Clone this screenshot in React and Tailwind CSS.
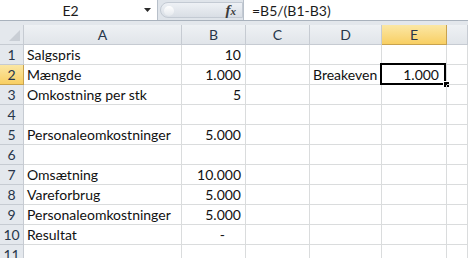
const cols = [
  { key: "A", w: "w-[158px]" },
  { key: "B", w: "w-[64px]" },
  { key: "C", w: "w-[64px]" },
  { key: "D", w: "w-[72px]" },
  { key: "E", w: "w-[65px]" },
  { key: "F", w: "flex-1" },
];

const rows = [
  { n: 1, A: "Salgspris", B: "10" },
  { n: 2, A: "Mængde", B: "1.000", D: "Breakeven", E: "1.000" },
  { n: 3, A: "Omkostning per stk", B: "5" },
  { n: 4 },
  { n: 5, A: "Personaleomkostninger", B: "5.000" },
  { n: 6 },
  { n: 7, A: "Omsætning", B: "10.000" },
  { n: 8, A: "Vareforbrug", B: "5.000" },
  { n: 9, A: "Personaleomkostninger", B: "5.000" },
  { n: 10, A: "Resultat", B: "-" },
  { n: 11 },
];

const FormulaBar = () => (
  <div className="flex h-[21px] border-b border-[#a9b2bd] bg-[#dfe4ea]">
    <div className="relative flex w-[158px] items-center justify-center border-r border-[#b8c0ca] bg-white text-[14px] text-[#1b1b1b]">
      <span className="-ml-[16px]">E2</span>
      <svg className="absolute right-[6px] top-[8px]" width="7" height="4" viewBox="0 0 7 4">
        <path d="M0 0h7L3.5 4z" fill="#2b2b2b" />
      </svg>
    </div>
    <div className="flex w-[85px] items-center py-[2px] pl-[2px]">
      <div className="relative flex h-full flex-1 items-center justify-end rounded-l-full border border-[#c3cad3] bg-gradient-to-b from-[#eef1f5] to-[#d9dee5] pr-[6px]">
        <div className="absolute left-[3px] top-[3px] h-[10px] w-[10px] rounded-full bg-gradient-to-b from-white to-[#e4e8ed]" />
        <span className="font-['Liberation_Serif'] text-[15px] font-bold italic leading-none text-[#3a3a3a]">
          f<span className="text-[11px]">x</span>
        </span>
      </div>
    </div>
    <div className="flex flex-1 items-center border-l border-[#b8c0ca] bg-white pl-[8px] text-[14px] text-[#1b1b1b]">
      =B5/(B1-B3)
    </div>
  </div>
);

const HeaderRow = () => (
  <div className="flex h-[20px]">
    <div className="relative w-[24px] border-r border-b border-[#c6cbd2] bg-[#e4e8ed]">
      <svg className="absolute right-[3px] bottom-[3px]" width="11" height="11" viewBox="0 0 11 11">
        <path d="M11 0V11H0z" fill="#c9ced5" />
      </svg>
    </div>
    {cols.map((c) =>
      c.key === "E" ? (
        <div
          key={c.key}
          className={`${c.w} flex items-center justify-center border-r border-b border-[#c8a24e] bg-gradient-to-b from-[#fbe7a4] to-[#f8cf62] text-[14px] text-[#28364a]`}
        >
          {c.key}
        </div>
      ) : (
        <div
          key={c.key}
          className={`${c.w} flex items-center justify-center border-r border-b border-[#c6cbd2] bg-gradient-to-b from-[#eef1f4] to-[#e1e5ea] text-[14px] text-[#28364a]`}
        >
          {c.key === "F" ? "" : c.key}
        </div>
      )
    )}
  </div>
);

const Cell = ({ col, row }) => {
  const v = row[col.key];
  const right = col.key === "B" || col.key === "E";
  const selected = row.n === 2 && col.key === "E";
  let pad = "justify-start pl-[3px]";
  if (right) pad = v === "-" ? "justify-end pr-[20px]" : col.key === "E" ? "justify-end pr-[7px]" : "justify-end pr-[4px]";
  return (
    <div
      className={`${col.w} relative flex items-center overflow-visible whitespace-nowrap border-r border-b border-[#dadcdd] text-[14px] text-[#111] ${pad}`}
    >
      {v}
      {selected && (
        <>
          <div className="absolute -left-[2px] -top-[2px] h-[22px] w-[66px] border-2 border-black" />
          <div className="absolute -right-[4px] -bottom-[4px] h-[7px] w-[7px] border border-white bg-black" />
        </>
      )}
    </div>
  );
};

export default function App() {
  return (
    <div className="h-[258px] w-[468px] overflow-hidden bg-white font-['Lato',sans-serif]">
      <FormulaBar />
      <div className="h-[4px] bg-[#e3e7ec]" />
      <HeaderRow />
      {rows.map((row) => (
        <div key={row.n} className="flex h-[20px]">
          <div
            className={`flex w-[24px] items-center justify-center border-r border-b text-[14px] text-[#28364a] ${
              row.n === 2
                ? "border-[#c8a24e] bg-gradient-to-b from-[#fbe7a4] to-[#f8cf62]"
                : "border-[#c6cbd2] bg-[#e4e8ed]"
            }`}
          >
            {row.n}
          </div>
          {cols.map((c) => (
            <Cell key={c.key} col={c} row={row} />
          ))}
        </div>
      ))}
    </div>
  );
}
